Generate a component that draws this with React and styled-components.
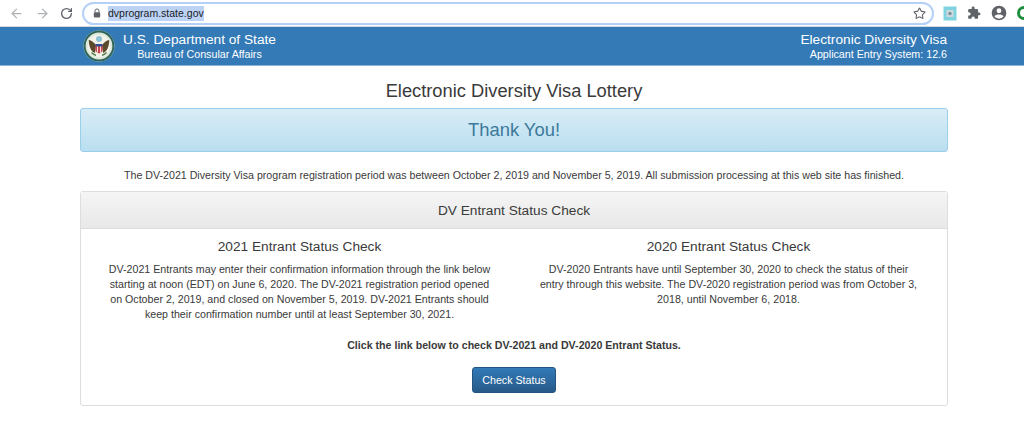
import React from "react";
import styled, { createGlobalStyle } from "styled-components";
import { ArrowLeft, ArrowRight, RotateCw, Star } from "lucide-react";

const GlobalStyle = createGlobalStyle`
  html, body {
    margin: 0;
    padding: 0;
    background: #fff;
    overflow: hidden;
  }
  body {
    font-family: "Liberation Sans", Arial, sans-serif;
    color: #3a3a3a;
  }
`;

const Seal = () => (
  <svg width="32" height="32" viewBox="0 0 32 32">
    <circle cx="16" cy="16" r="15.5" fill="#dfe8dc" />
    <circle cx="16" cy="16" r="14.4" fill="none" stroke="#2f6458" strokeWidth="2" />
    <circle cx="16" cy="16" r="11.2" fill="#f4f3ea" />
    <circle cx="16" cy="9" r="3" fill="#8fc3d6" />
    <path d="M5.800 10c2.500.3 5.700 2.500 7.200 5.500l-1 7.500c-3.700-1.300-6.200-6-6.200-13z" fill="#5c4a2c" />
    <path d="M26.200 10c-2.500.3-5.700 2.500-7.200 5.500l1 7.500c3.700-1.300 6.200-6 6.200-13z" fill="#5c4a2c" />
    <path d="M12.500 14h7v6c0 1.800-2 3-3.500 3.500-1.500-.5-3.500-1.700-3.500-3.500z" fill="#c8474f" />
    <rect x="12.500" y="14" width="7" height="2.500" fill="#2f4f8f" />
    <path d="M14.500 16.500v6M17.500 16.500v6" stroke="#fff" strokeWidth=".8" />
    <path d="M8.500 22.500c1.500 1.500 3.500 2.500 4.500 2.700M23.500 22.500c-1.500 1.500-3.500 2.500-4.500 2.700" stroke="#4f7a45" strokeWidth="1.500" fill="none" />
  </svg>
);

const LockIcon = () => (
  <svg width="8" height="10" viewBox="0 0 10 12">
    <path d="M2.500 5V3.400a2.500 2.500 0 0 1 5 0V5" fill="none" stroke="#5f6368" strokeWidth="1.200" />
    <rect x="1" y="5" width="8" height="6.500" rx="1" fill="#5f6368" />
  </svg>
);

const SafeIcon = () => (
  <svg width="14" height="15" viewBox="0 0 14 15">
    <rect width="13" height="14" x=".5" y=".5" fill="#7fd3df" />
    <rect width="7" height="7" x="3.500" y="4" fill="#cfd8dc" />
    <circle cx="7" cy="7.500" r="1.700" fill="#78909c" />
  </svg>
);

const PuzzleIcon = () => (
  <svg width="14" height="14" viewBox="0 0 24 24">
    <path
      fill="#5f6368"
      d="M20.500 11H19V7a2 2 0 0 0-2-2h-4V3.500a2.500 2.500 0 0 0-5 0V5H4a2 2 0 0 0-2 2v3.800h1.500a2.700 2.700 0 0 1 0 5.400H2V20a2 2 0 0 0 2 2h3.800v-1.500a2.700 2.700 0 0 1 5.400 0V22H17a2 2 0 0 0 2-2v-4h1.500a2.500 2.500 0 0 0 0-5z"
    />
  </svg>
);

const AccountIcon = () => (
  <svg width="16" height="16" viewBox="0 0 24 24">
    <path
      fill="#5f6368"
      d="M12 1a11 11 0 1 0 0 22 11 11 0 0 0 0-22zm0 4a3.600 3.600 0 1 1 0 7.200A3.600 3.600 0 0 1 12 5zm0 15.600a8.600 8.600 0 0 1-7-3.600c1-1.800 4.500-2.800 7-2.800s6 1 7 2.800a8.600 8.600 0 0 1-7 3.600z"
    />
  </svg>
);

const BrowserBar = styled.div`
  display: flex;
  align-items: center;
  height: 26px;
  background: #fff;
  border-bottom: 1px solid #d6d9dc;
  padding-left: 9px;
  overflow: hidden;
`;
const NavButtons = styled.div`
  display: flex;
  align-items: center;
  gap: 10.500px;
  width: 73px;
  flex: none;
`;
const AddressBar = styled.div`
  display: flex;
  align-items: center;
  justify-content: space-between;
  box-sizing: border-box;
  width: 852px;
  height: 23px;
  flex: none;
  border: 2px solid #b5d0f7;
  border-radius: 12px;
  padding: 0 6px 0 9px;
`;
const UrlGroup = styled.div`
  display: flex;
  align-items: center;
  gap: 7px;
`;
const Url = styled.span`
  font-size: 10.500px;
  color: #202124;
  background: #bcd3f5;
  line-height: 15px;
`;
const ToolIcons = styled.div`
  display: flex;
  align-items: center;
  gap: 10px;
  margin-left: 9px;
`;
const ProfileDot = styled.span`
  width: 14px;
  height: 14px;
  flex: none;
  box-sizing: border-box;
  border: 3px solid #1e8e3e;
  border-radius: 50%;
`;

const Banner = styled.header`
  display: flex;
  justify-content: space-between;
  height: 38px;
  background: #337ab7;
  color: #fff;
  padding: 0 77px 0 83px;
  border-bottom: 1px solid #8fb5d6;
`;
const BrandGroup = styled.div`
  display: flex;
  align-items: center;
  gap: 8px;
`;
const BrandText = styled.div`
  display: flex;
  flex-direction: column;
  align-items: center;
`;
const AppText = styled.div`
  display: flex;
  flex-direction: column;
  align-items: flex-end;
  justify-content: center;
`;
const BannerTitle = styled.div`
  font-size: 13.700px;
  line-height: 16px;
`;
const BannerSub = styled.div`
  font-size: 10.700px;
  line-height: 13px;
`;

const Main = styled.main`
  margin: 0 76px 0 80px;
`;
const PageTitle = styled.h1`
  margin: 15px 0 7px;
  font-size: 18.300px;
  line-height: 20px;
  font-weight: 400;
  text-align: center;
`;
const ThankBox = styled.div`
  height: 44px;
  box-sizing: border-box;
  display: flex;
  align-items: center;
  justify-content: center;
  border: 1px solid #9acfea;
  border-radius: 3px;
  background: linear-gradient(to bottom, #d9edf7 0%, #b9def0 100%);
  color: #3d7a99;
  font-size: 18.400px;
`;
const Notice = styled.p`
  margin: 16px 0 9px;
  font-size: 10.650px;
  line-height: 14px;
  text-align: center;
`;
const Panel = styled.section`
  box-sizing: border-box;
  height: 215px;
  border: 1px solid #ddd;
  border-radius: 3px;
`;
const PanelHeading = styled.div`
  height: 37px;
  box-sizing: border-box;
  display: flex;
  align-items: center;
  justify-content: center;
  background: linear-gradient(to bottom, #f5f5f5 0%, #e8e8e8 100%);
  border-bottom: 1px solid #ddd;
  font-size: 13.700px;
`;
const Columns = styled.div`
  display: grid;
  grid-template-columns: 1fr 1fr;
  padding: 0 19px 0 19px;
  column-gap: 30px;
`;
const Column = styled.div`
  text-align: center;
  padding-top: 10px;
`;
const ColumnTitle = styled.h3`
  margin: 0 0 8px;
  font-size: 13.700px;
  line-height: 15px;
  font-weight: 400;
`;
const ColumnText = styled.p`
  margin: 0;
  font-size: 10.660px;
  line-height: 15px;
`;
const CallToAction = styled.p`
  margin: 16px 0 15px;
  font-size: 10.630px;
  line-height: 14px;
  font-weight: 700;
  text-align: center;
`;
const ButtonRow = styled.div`
  display: flex;
  justify-content: center;
`;
const CheckButton = styled.button`
  width: 84px;
  height: 26px;
  border: 1px solid #245580;
  border-radius: 3px;
  background: linear-gradient(to bottom, #337ab7 0%, #265a88 100%);
  color: #fff;
  font-family: inherit;
  font-size: 10.650px;
  padding: 0;
  cursor: pointer;
`;

const columns = [
  {
    title: "2021 Entrant Status Check",
    lines: [
      "DV-2021 Entrants may enter their confirmation information through the link below",
      "starting at noon (EDT) on June 6, 2020. The DV-2021 registration period opened",
      "on October 2, 2019, and closed on November 5, 2019. DV-2021 Entrants should",
      "keep their confirmation number until at least September 30, 2021.",
    ],
  },
  {
    title: "2020 Entrant Status Check",
    lines: [
      "DV-2020 Entrants have until September 30, 2020 to check the status of their",
      "entry through this website. The DV-2020 registration period was from October 3,",
      "2018, until November 6, 2018.",
    ],
  },
];

export default function App() {
  return (
    <>
      <GlobalStyle />
      <BrowserBar>
        <NavButtons>
          <ArrowLeft size={15} color="#b0b3b6" />
          <ArrowRight size={15} color="#b0b3b6" />
          <RotateCw size={13} color="#5f6368" strokeWidth={2.4} />
        </NavButtons>
        <AddressBar>
          <UrlGroup>
            <LockIcon />
            <Url>dvprogram.state.gov</Url>
          </UrlGroup>
          <Star size={13} color="#5f6368" strokeWidth={2} />
        </AddressBar>
        <ToolIcons>
          <SafeIcon />
          <PuzzleIcon />
          <AccountIcon />
          <ProfileDot />
        </ToolIcons>
      </BrowserBar>
      <Banner>
        <BrandGroup>
          <Seal />
          <BrandText>
            <BannerTitle>U.S. Department of State</BannerTitle>
            <BannerSub>Bureau of Consular Affairs</BannerSub>
          </BrandText>
        </BrandGroup>
        <AppText>
          <BannerTitle>Electronic Diversity Visa</BannerTitle>
          <BannerSub>Applicant Entry System: 12.6</BannerSub>
        </AppText>
      </Banner>
      <Main>
        <PageTitle>Electronic Diversity Visa Lottery</PageTitle>
        <ThankBox>Thank You!</ThankBox>
        <Notice>
          The DV-2021 Diversity Visa program registration period was between October 2, 2019 and
          November 5, 2019. All submission processing at this web site has finished.
        </Notice>
        <Panel>
          <PanelHeading>DV Entrant Status Check</PanelHeading>
          <Columns>
            {columns.map((col) => (
              <Column key={col.title}>
                <ColumnTitle>{col.title}</ColumnTitle>
                <ColumnText>
                  {col.lines.map((line) => (
                    <React.Fragment key={line}>
                      {line}
                      <br />
                    </React.Fragment>
                  ))}
                </ColumnText>
              </Column>
            ))}
          </Columns>
          <CallToAction>Click the link below to check DV-2021 and DV-2020 Entrant Status.</CallToAction>
          <ButtonRow>
            <CheckButton>Check Status</CheckButton>
          </ButtonRow>
        </Panel>
      </Main>
    </>
  );
}
